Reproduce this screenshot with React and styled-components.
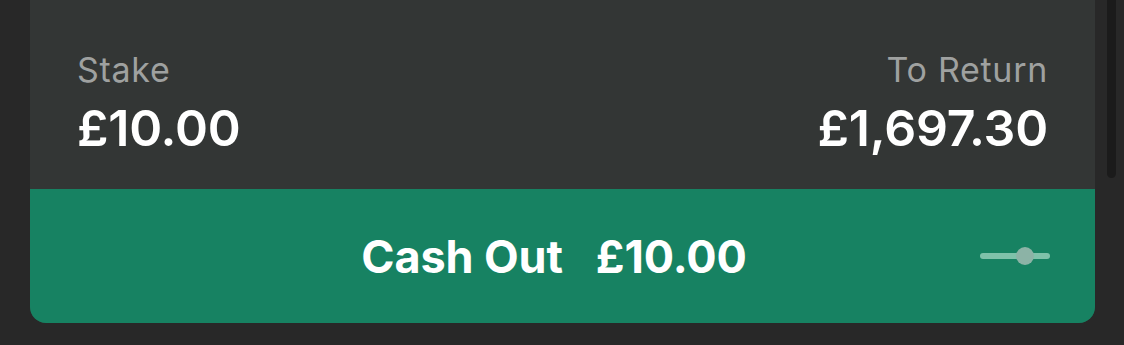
import styled, { createGlobalStyle } from "styled-components";

const GlobalStyle = createGlobalStyle`
  html, body {
    margin: 0;
    padding: 0;
    background: #282828;
  }
  body {
    font-family: Inter, "Liberation Sans", Arial, sans-serif;
    -webkit-font-smoothing: antialiased;
  }
`;

const Page = styled.div`
  position: relative;
  height: 345px;
  padding: 0 29px 0 30px;
  box-sizing: border-box;
`;

const Scrollbar = styled.div`
  position: absolute;
  top: -6px;
  right: 8px;
  width: 9px;
  height: 184px;
  border-radius: 5px;
  background: #1b1b1b;
`;

const Card = styled.div`
  background: #333635;
  border-radius: 0 0 16px 16px;
  overflow: hidden;
`;

const Summary = styled.div`
  height: 189px;
  box-sizing: border-box;
  padding: 53px 47px 0;
  display: flex;
  justify-content: space-between;
`;

const Column = styled.div`
  display: flex;
  flex-direction: column;
  align-items: ${(p) => (p.$right ? "flex-end" : "flex-start")};
`;

const Label = styled.div`
  font-size: 34px;
  line-height: 34px;
  color: #9fa1a0;
  letter-spacing: 0.7px;
`;

const Amount = styled.div`
  margin-top: 16px;
  font-size: 50px;
  line-height: 50px;
  font-weight: 600;
  color: #ffffff;
  letter-spacing: -0.2px;
`;

const CashOutButton = styled.div`
  height: 134px;
  background: #178262;
  display: grid;
  grid-template-columns: 1fr auto 1fr;
  align-items: center;
  padding: 0 45px;
  cursor: pointer;
`;

const CashOutText = styled.div`
  grid-column: 2;
  display: flex;
  gap: 33px;
  margin-right: 17px;
  font-size: 45px;
  font-weight: 700;
  color: #ffffff;
  letter-spacing: -0.1px;
`;

const SliderIcon = styled.svg`
  grid-column: 3;
  justify-self: end;
`;

export default function App() {
  return (
    <>
      <GlobalStyle />
      <Page>
        <Card>
          <Summary>
            <Column>
              <Label>Stake</Label>
              <Amount>£10.00</Amount>
            </Column>
            <Column $right>
              <Label>To Return</Label>
              <Amount>£1,697.30</Amount>
            </Column>
          </Summary>
          <CashOutButton>
            <CashOutText>
              <span>Cash Out</span>
              <span>£10.00</span>
            </CashOutText>
            <SliderIcon width="70" height="20" viewBox="0 0 70 20">
              <line x1="3" y1="10" x2="67" y2="10" stroke="#7fc2aa" strokeWidth="6" strokeLinecap="round" />
              <circle cx="45" cy="10" r="9" fill="#8cb3a6" />
            </SliderIcon>
          </CashOutButton>
        </Card>
        <Scrollbar />
      </Page>
    </>
  );
}
